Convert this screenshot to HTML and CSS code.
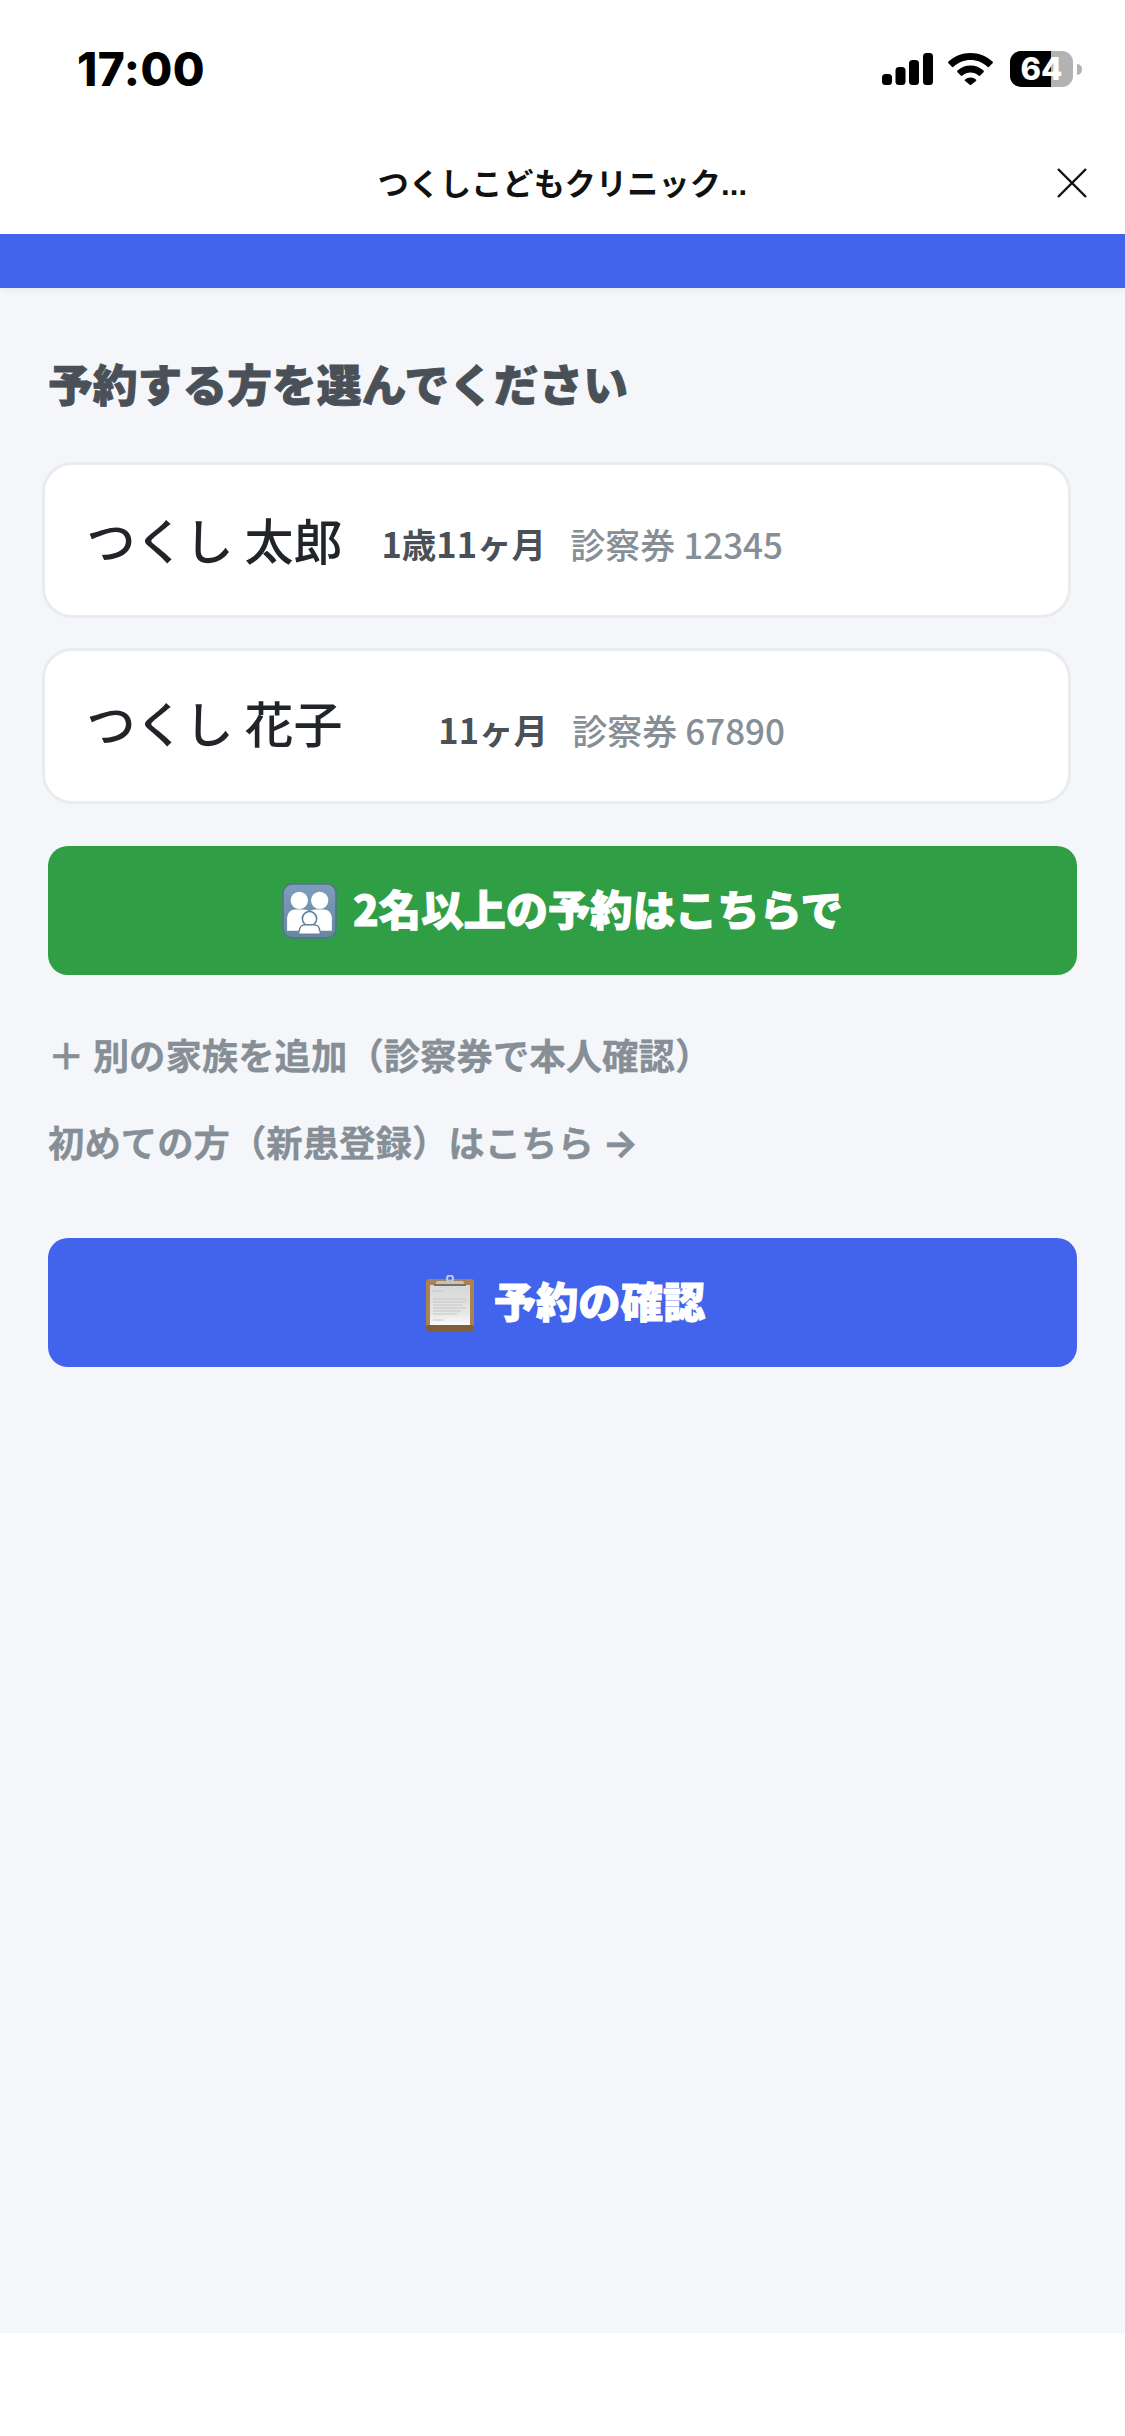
FILE: index.html
```html
<!DOCTYPE html>
<html lang="ja">
<head>
    <meta charset="UTF-8">
    <title>つくしこどもクリニック</title>
    <link rel="stylesheet" href="styles.css">
</head>
<body>
    <div class="status-bar">
        <div class="status-time">17:00</div>
        <div class="status-icons">
            <svg class="icon-signal" width="51" height="32" viewBox="0 0 51 32">
                <rect x="0" y="21" width="10" height="11" rx="3.5"/>
                <rect x="13.5" y="14" width="10" height="18" rx="3.5"/>
                <rect x="27" y="7" width="10" height="25" rx="3.5"/>
                <rect x="41" y="0" width="10" height="32" rx="3.5"/>
            </svg>
            <svg class="icon-wifi" width="45" height="32" viewBox="0 0 45 32">
                <path d="M22.5 0C14 0 6.3 3.2 0.5 8.6a1.2 1.2 0 0 0 0 1.7l3.3 3.4a1.2 1.2 0 0 0 1.7 0C10 9.500 16 7 22.500 7s12.500 2.500 17 6.700a1.200 1.200 0 0 0 1.700 0l3.300-3.400a1.200 1.200 0 0 0 0-1.700C38.700 3.200 31 0 22.500 0z"/>
                <path d="M22.500 12.500c-5 0-9.500 1.900-13 5a1.200 1.200 0 0 0 0 1.700l3.300 3.400a1.200 1.200 0 0 0 1.700 0c2.100-1.800 5-3 8-3s5.900 1.200 8 3a1.200 1.200 0 0 0 1.700 0l3.300-3.400a1.200 1.200 0 0 0 0-1.700c-3.500-3.100-8-5-13-5z"/>
                <path d="M22.500 24.500c-2.100 0-4 .7-5.400 2a1 1 0 0 0 0 1.500l4.700 3.700a1 1 0 0 0 1.400 0l4.700-3.700a1 1 0 0 0 0-1.500c-1.400-1.300-3.300-2-5.400-2z"/>
            </svg>
            <div class="battery">
                <div class="battery-body">64</div>
                <div class="battery-nub"></div>
            </div>
        </div>
    </div>

    <div class="nav">
        <div class="nav-title">つくしこどもクリニック<span class="nav-dots">...</span></div>
        <svg class="nav-close" width="30" height="30" viewBox="0 0 30 30">
            <path d="M1 1L29 29M29 1L1 29" stroke="#111" stroke-width="2.400" fill="none"/>
        </svg>
    </div>

    <div class="brand-bar"></div>

    <div class="content">
        <h1 class="heading">予約する方を選んでください</h1>

        <div class="patient-list">
            <div class="patient-card">
                <span class="patient-name">つくし 太郎</span>
                <span class="patient-age">1歳11ヶ月</span>
                <span class="patient-ticket">診察券 12345</span>
            </div>
            <div class="patient-card second">
                <span class="patient-name">つくし 花子</span>
                <span class="patient-age">11ヶ月</span>
                <span class="patient-ticket">診察券 67890</span>
            </div>
        </div>

        <button class="action-button green">
            <svg class="emoji" width="55" height="56" viewBox="0 0 54 55">
                <defs>
                    <linearGradient id="familyBg" x1="0" y1="0" x2="0" y2="1">
                        <stop offset="0" stop-color="#7f9dbd"/>
                        <stop offset="1" stop-color="#67879f"/>
                    </linearGradient>
                </defs>
                <rect x="1" y="1" width="52" height="53" rx="9" fill="url(#familyBg)" stroke="#56718d" stroke-width="1.500"/>
                <circle cx="17" cy="17" r="8.500" fill="#fff"/>
                <circle cx="37" cy="17" r="8.500" fill="#fff"/>
                <path d="M5 47V35c0-6 4-9 8-9h8c5 0 8 3 8 9v12z" fill="#fff"/>
                <path d="M25 47V35c0-6 3-9 8-9h8c4 0 8 3 8 9v12z" fill="#fff"/>
                <circle cx="27" cy="35" r="7" fill="#fff" stroke="#5f7f9f" stroke-width="1.500"/>
                <path d="M17 50v-3c0-4 3-6 6-6h8c3 0 6 2 6 6v3z" fill="#fff" stroke="#5f7f9f" stroke-width="1.500"/>
                <path d="M17 48.500h20" stroke="#fff" stroke-width="2"/>
            </svg>
            <span class="action-label">2名以上の予約はこちらで</span>
        </button>

        <div class="link-list">
            <div class="text-link">＋ 別の家族を追加（診察券で本人確認）</div>
            <div class="text-link">初めての方（新患登録）はこちら <span class="link-arrow">→</span></div>
        </div>

        <button class="action-button blue">
            <svg class="emoji" width="48" height="56" viewBox="0 0 48 56">
                <defs>
                    <linearGradient id="paper" x1="0" y1="0" x2="0" y2="1">
                        <stop offset="0" stop-color="#d8d8d8"/>
                        <stop offset="0.700" stop-color="#e6e6e6"/>
                        <stop offset="1" stop-color="#fcfcfc"/>
                    </linearGradient>
                </defs>
                <rect x="0" y="4" width="48" height="52" rx="3" fill="#a98352"/>
                <rect x="0" y="50" width="48" height="6" rx="2" fill="#80603a"/>
                <rect x="4" y="10" width="40" height="40" fill="url(#paper)"/>
                <path d="M7 16h10M7 24h33M7 27h33M7 30h30M7 33h33M7 36h28M7 39h24M7 45h10" stroke="#c6c6c6" stroke-width="1"/>
                <circle cx="24" cy="3.500" r="3" fill="none" stroke="#c8ccd2" stroke-width="2"/>
                <path d="M9 10l2-4h26l2 4z" fill="#bfc3c9"/>
                <rect x="8" y="9" width="32" height="2" fill="#7b7064"/>
            </svg>
            <span class="action-label">予約の確認</span>
        </button>
    </div>

    <div class="home-area"></div>
</body>
</html>
```

FILE: styles.css
```css
* {
    box-sizing: border-box;
}
html, body {
    margin: 0;
    padding: 0;
}
body {
    width: 1125px;
    height: 2436px;
    display: flex;
    flex-direction: column;
    background: #fff;
    font-family: "Noto Sans CJK JP", "Noto Sans", sans-serif;
    overflow: hidden;
}

/* status bar */
.status-bar {
    height: 100px;
    padding: 44px 43px 0 77px;
    display: flex;
    justify-content: space-between;
    align-items: flex-start;
}
.status-time {
    font-family: Inter, sans-serif;
    font-size: 46px;
    font-weight: 800;
    line-height: 50px;
    letter-spacing: 0.500px;
    color: #000;
}
.status-icons {
    display: flex;
    align-items: center;
    gap: 15px;
    margin-top: 7px;
    height: 36px;
}
.icon-signal, .icon-wifi {
    display: block;
    fill: #000;
}
.battery {
    display: flex;
    align-items: center;
    gap: 4px;
    margin-left: 2px;
}
.battery-body {
    width: 63px;
    height: 36px;
    border-radius: 11px;
    background: linear-gradient(to right, #000 0, #000 41px, #b3b3b3 41px);
    color: #fff;
    font-family: Inter, sans-serif;
    font-weight: 800;
    font-size: 31px;
    line-height: 36px;
    text-align: center;
}
.battery-nub {
    width: 5px;
    height: 11px;
    border-radius: 0 5px 5px 0;
    background: #b3b3b3;
}

/* navigation */
.nav {
    height: 134px;
    padding-top: 67px;
    position: relative;
    text-align: center;
}
.nav-title {
    font-size: 31px;
    font-weight: 700;
    line-height: 30px;
    color: #111;
    letter-spacing: 0.200px;
}
.nav-dots {
    font-family: "Liberation Sans", sans-serif;
}
.nav-close {
    position: absolute;
    top: 68px;
    right: 38px;
}

.brand-bar {
    height: 54px;
    background: #4263eb;
    box-shadow: 0 2px 8px rgba(0, 0, 0, 0.05);
    position: relative;
}

/* main */
.content {
    height: 2045px;
    background: #f5f6fa;
    padding: 65px 48px 0 48px;
}
.heading {
    margin: 0 0 49px 0;
    font-size: 44.800px;
    font-weight: 900;
    line-height: 60px;
    color: #495057;
    -webkit-text-stroke: 0.800px #495057;
}
.patient-list {
    display: flex;
    flex-direction: column;
    gap: 30px;
    margin-left: -6px;
    width: 1029px;
}
.patient-card {
    height: 156px;
    padding: 0 0 0 41.500px;
    background: #fff;
    border: 3px solid #e9ecef;
    border-radius: 30px;
    display: grid;
    grid-template-columns: 259.500px 200px 237px;
    align-items: center;
}
.patient-name {
    font-size: 49px;
    font-weight: 500;
    line-height: 60px;
    color: #212529;
    white-space: nowrap;
    margin-bottom: 2px;
}
.patient-card.second .patient-name {
    margin-bottom: 8px;
}
.patient-age {
    font-size: 34.500px;
    font-weight: 700;
    line-height: 50px;
    color: #495057;
    text-align: right;
    margin-top: 6px;
}
.patient-card.second .patient-age {
    margin-right: -2px;
}
.patient-ticket {
    font-size: 35px;
    font-weight: 500;
    line-height: 50px;
    color: #868e96;
    text-align: right;
    margin-top: 7px;
}
.patient-card.second .patient-ticket {
    margin-right: -2px;
}
.action-button {
    width: 100%;
    height: 129px;
    border: none;
    border-radius: 20px;
    color: #fff;
    font-family: inherit;
    font-size: 42.300px;
    font-weight: 900;
    line-height: 60px;
    display: flex;
    align-items: center;
    justify-content: center;
    padding: 0;
    -webkit-text-stroke: 1px #fff;
}
.action-label {
    margin-bottom: 5px;
}
.action-button.green {
    margin-top: 42px;
    background: #2f9e44;
    gap: 16px;
}
.action-button.blue {
    margin-top: 69px;
    background: #4263eb;
    gap: 20px;
    padding-left: 6px;
}
.emoji {
    display: block;
    flex: none;
}
.link-list {
    margin-top: 51px;
    display: flex;
    flex-direction: column;
    gap: 31px;
}
.text-link {
    font-size: 36.400px;
    font-weight: 700;
    line-height: 56px;
    color: #868e96;
    -webkit-text-stroke: 0.300px #868e96;
}
.link-arrow {
    font-family: Inter, sans-serif;
    font-size: 38px;
    line-height: 1;
}
.home-area {
    flex: 1;
    background: #fff;
}
```
